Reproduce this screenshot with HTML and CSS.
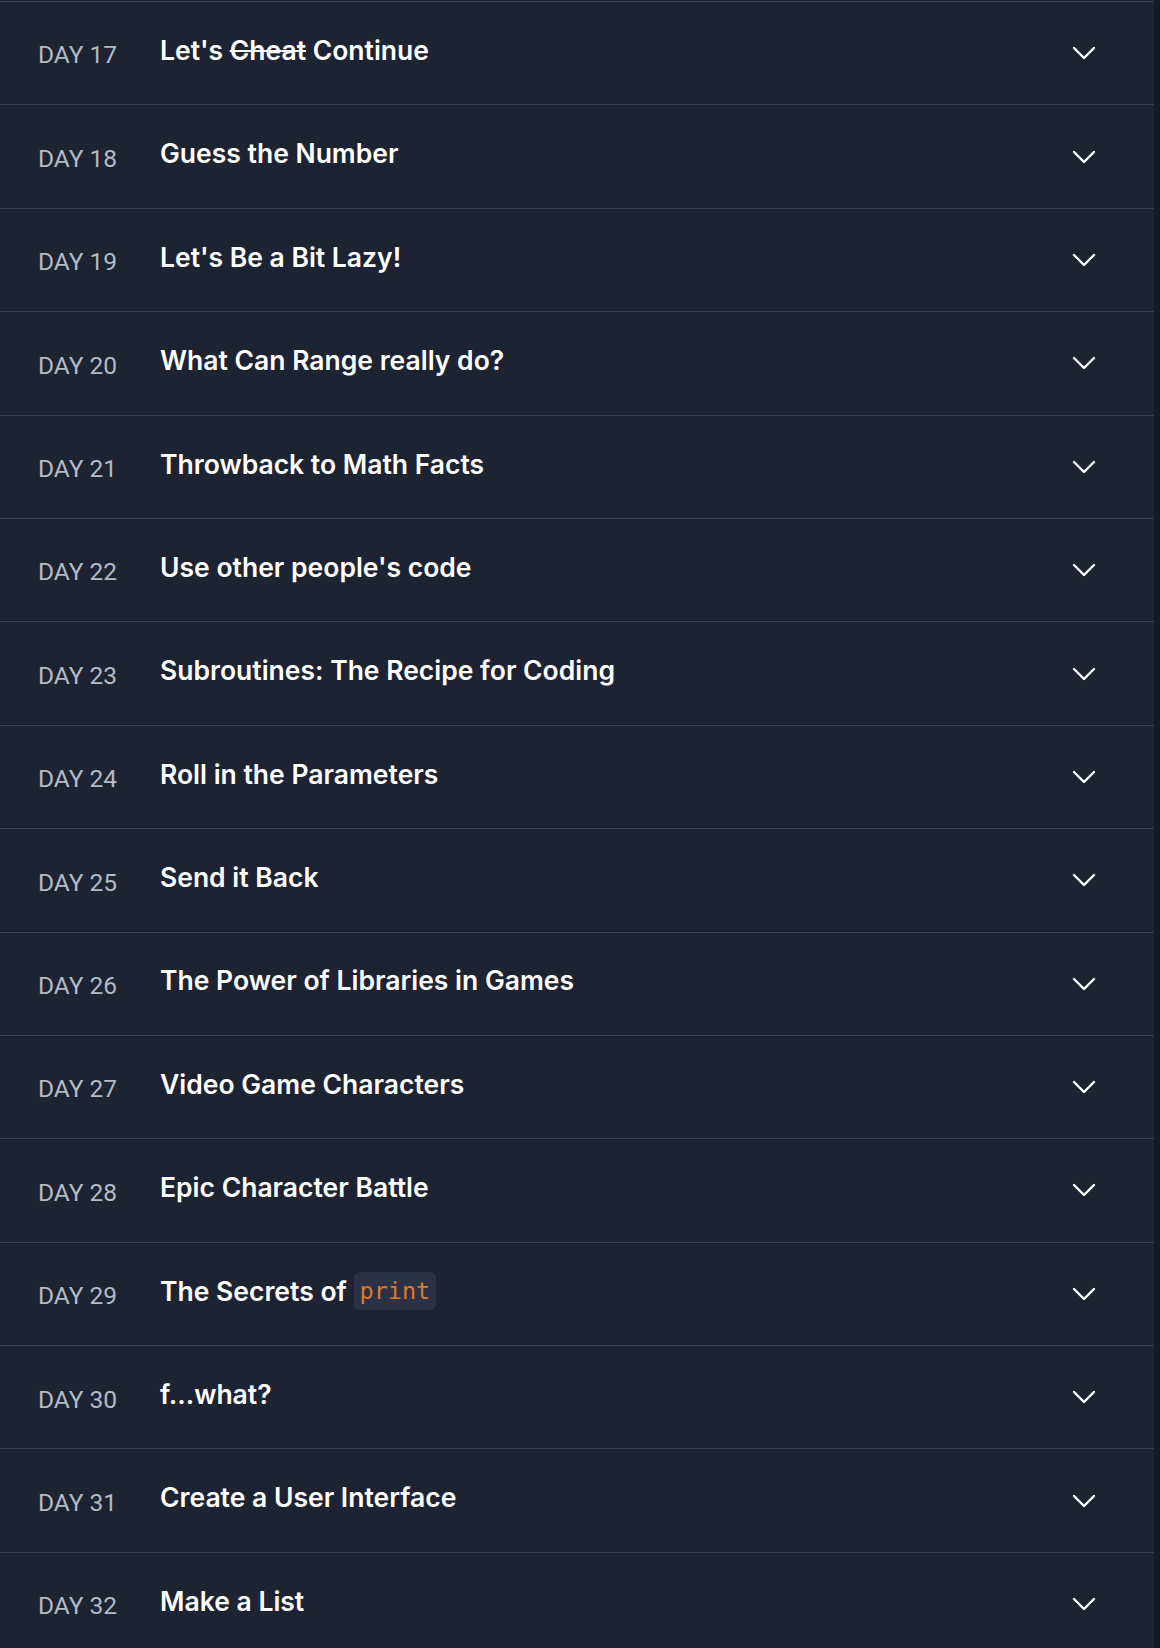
FILE: index.html
```html
<!DOCTYPE html>
<html lang="en">
<head>
<meta charset="utf-8">
<title>Days</title>
<link rel="stylesheet" href="styles.css">
</head>
<body>
<div class="panel">
  <ul class="days">
    <li class="day-row"><span class="day">DAY 17</span><span class="title">Let's <s>Cheat</s> Continue</span><svg class="chev" viewBox="0 0 24 14" width="24" height="14"><path d="M2 2 L12 12 L22 2"/></svg></li>
    <li class="day-row"><span class="day">DAY 18</span><span class="title">Guess the Number</span><svg class="chev" viewBox="0 0 24 14" width="24" height="14"><path d="M2 2 L12 12 L22 2"/></svg></li>
    <li class="day-row"><span class="day">DAY 19</span><span class="title">Let's Be a Bit Lazy!</span><svg class="chev" viewBox="0 0 24 14" width="24" height="14"><path d="M2 2 L12 12 L22 2"/></svg></li>
    <li class="day-row"><span class="day">DAY 20</span><span class="title">What Can Range really do?</span><svg class="chev" viewBox="0 0 24 14" width="24" height="14"><path d="M2 2 L12 12 L22 2"/></svg></li>
    <li class="day-row"><span class="day">DAY 21</span><span class="title">Throwback to Math Facts</span><svg class="chev" viewBox="0 0 24 14" width="24" height="14"><path d="M2 2 L12 12 L22 2"/></svg></li>
    <li class="day-row"><span class="day">DAY 22</span><span class="title">Use other people's code</span><svg class="chev" viewBox="0 0 24 14" width="24" height="14"><path d="M2 2 L12 12 L22 2"/></svg></li>
    <li class="day-row"><span class="day">DAY 23</span><span class="title">Subroutines: The Recipe for Coding</span><svg class="chev" viewBox="0 0 24 14" width="24" height="14"><path d="M2 2 L12 12 L22 2"/></svg></li>
    <li class="day-row"><span class="day">DAY 24</span><span class="title">Roll in the Parameters</span><svg class="chev" viewBox="0 0 24 14" width="24" height="14"><path d="M2 2 L12 12 L22 2"/></svg></li>
    <li class="day-row"><span class="day">DAY 25</span><span class="title">Send it Back</span><svg class="chev" viewBox="0 0 24 14" width="24" height="14"><path d="M2 2 L12 12 L22 2"/></svg></li>
    <li class="day-row"><span class="day">DAY 26</span><span class="title">The Power of Libraries in Games</span><svg class="chev" viewBox="0 0 24 14" width="24" height="14"><path d="M2 2 L12 12 L22 2"/></svg></li>
    <li class="day-row"><span class="day">DAY 27</span><span class="title">Video Game Characters</span><svg class="chev" viewBox="0 0 24 14" width="24" height="14"><path d="M2 2 L12 12 L22 2"/></svg></li>
    <li class="day-row"><span class="day">DAY 28</span><span class="title">Epic Character Battle</span><svg class="chev" viewBox="0 0 24 14" width="24" height="14"><path d="M2 2 L12 12 L22 2"/></svg></li>
    <li class="day-row"><span class="day">DAY 29</span><span class="title">The Secrets of <code class="code">print</code></span><svg class="chev" viewBox="0 0 24 14" width="24" height="14"><path d="M2 2 L12 12 L22 2"/></svg></li>
    <li class="day-row"><span class="day">DAY 30</span><span class="title">f...what?</span><svg class="chev" viewBox="0 0 24 14" width="24" height="14"><path d="M2 2 L12 12 L22 2"/></svg></li>
    <li class="day-row"><span class="day">DAY 31</span><span class="title">Create a User Interface</span><svg class="chev" viewBox="0 0 24 14" width="24" height="14"><path d="M2 2 L12 12 L22 2"/></svg></li>
    <li class="day-row"><span class="day">DAY 32</span><span class="title">Make a List</span><svg class="chev" viewBox="0 0 24 14" width="24" height="14"><path d="M2 2 L12 12 L22 2"/></svg></li>
  </ul>
</div>
</body>
</html>
```

FILE: styles.css
```css
html, body {
  margin: 0;
  padding: 0;
  background: #141925;
}

.panel {
  width: 1154px;
  background: #1e2333;
  padding-top: 1px;
  min-height: 1648px;
}

.days {
  list-style: none;
  margin: 0;
  padding: 0;
}

.day-row {
  display: flex;
  align-items: center;
  height: 102.4px;
  border-top: 1px solid #3a4155;
  padding: 0 58px 0 38px;
}

.day {
  width: 122px;
  flex: none;
  font-family: Roboto, "Liberation Sans", sans-serif;
  font-size: 24.5px;
  line-height: 1;
  color: #b5bac6;
  margin-top: 5px;
}

.title {
  flex: 1;
  font-family: Inter, "Noto Sans", sans-serif;
  font-weight: 600;
  font-size: 26.5px;
  line-height: 1;
  color: #ffffff;
  margin-top: -6px;
  display: flex;
  align-items: center;
  white-space: pre;
}

.title s {
  text-decoration-thickness: 2px;
}

.code {
  font-family: "DejaVu Sans Mono", "Liberation Mono", monospace;
  font-size: 23.5px;
  font-weight: 400;
  color: #dc7a28;
  background: #2c3245;
  border-radius: 6px;
  padding: 8px 6px 7px;
}

.chev {
  flex: none;
  fill: none;
  stroke: #ffffff;
  stroke-width: 2.4;
  stroke-linecap: round;
  stroke-linejoin: round;
}
```
